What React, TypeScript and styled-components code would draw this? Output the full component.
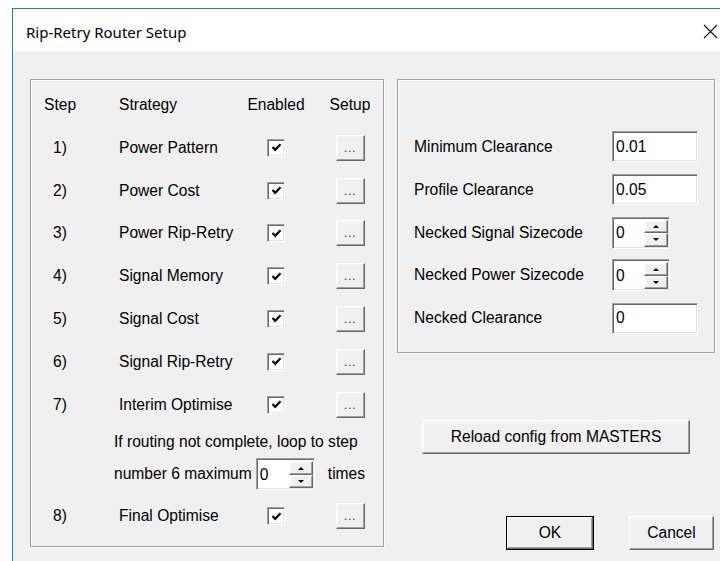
import React from "react";
import styled, { createGlobalStyle, css } from "styled-components";

const GlobalStyle = createGlobalStyle`
  html, body {
    margin: 0;
    background: #fff;
    overflow: hidden;
  }
  body {
    font-family: "Liberation Sans", Arial, sans-serif;
    font-size: 15.6px;
    color: #000;
  }
`;

const sunken = css`
  box-sizing: border-box;
  background: #fff;
  border-top: 1px solid #a0a0a0;
  border-left: 1px solid #a0a0a0;
  border-right: 1px solid #fff;
  border-bottom: 1px solid #fff;
  box-shadow: inset 1px 1px #696969, inset -1px -1px #e3e3e3;
`;

const raised = css`
  box-sizing: border-box;
  background: #f0f0f0;
  border-top: 1px solid #fff;
  border-left: 1px solid #fff;
  border-right: 1px solid #696969;
  border-bottom: 1px solid #696969;
  box-shadow: inset -1px -1px #a0a0a0, inset 1px 1px #f7f7f7;
`;

// the window is wider and taller than the page, so only its top and left edges show
const Window = styled.div`
  margin: 8px 0 0 12px;
  width: 707px;
  height: 552px;
  border: 1px solid #1883d7;
  background: #f0f0f0;
  display: flex;
  flex-direction: column;
`;

const TitleBar = styled.div`
  height: 42px;
  flex: none;
  background: #fff;
  display: flex;
  align-items: center;
  padding-left: 13px;
`;

const Title = styled.span`
  font-family: "Segoe UI", "Noto Sans", sans-serif;
  font-size: 15px;
  padding-top: 3px;
`;

const CloseButton = styled.div`
  margin-left: auto;
  width: 20px;
  height: 42px;
  display: flex;
  align-items: center;
  justify-content: center;
  padding-top: 2px;
`;

const Body = styled.div`
  display: flex;
  align-items: flex-start;
  gap: 13px;
  padding: 28px 0 0 17px;
`;

const GroupBox = styled.div<{ $w: number; $h: number }>`
  box-sizing: border-box;
  flex: none;
  width: ${(p) => p.$w}px;
  height: ${(p) => p.$h}px;
  border: 1px solid #a0a0a0;
  box-shadow: inset 1px 1px #fff, 1px 1px #fff;
`;

const StrategyBox = styled(GroupBox)`
  padding: 3.6px 0 0 13px;
`;

const StrategyRow = styled.div`
  display: grid;
  grid-template-columns: 75px 128px 58px 69px;
  align-items: center;
  height: 42.8px;
`;

const StepCell = styled.span`
  width: 32px;
  text-align: center;
`;

const CheckCell = styled.span`
  display: flex;
  justify-content: center;
`;

const SetupCell = styled.span`
  justify-self: end;
  width: 48px;
  display: flex;
  justify-content: center;
`;

const LoopNote = styled.div`
  margin-left: 70px;
`;

const LoopLine = styled.div<{ $h: number }>`
  height: ${(p) => p.$h}px;
  display: flex;
  align-items: center;
`;

const SpinGap = styled.span<{ $w: number }>`
  width: ${(p) => p.$w}px;
`;

const FinalRow = styled(StrategyRow)`
  margin-top: 4px;
`;

const CheckBox = styled.span`
  ${sunken};
  width: 18px;
  height: 18px;
  display: flex;
  align-items: center;
  justify-content: center;
`;

const DotsButton = styled.div`
  ${raised};
  width: 29px;
  height: 26px;
  display: flex;
  align-items: flex-end;
  justify-content: center;
  font-size: 13px;
  color: #444;
  padding-bottom: 5px;
  letter-spacing: 0.5px;
`;

const RightColumn = styled.div`
  width: 318px;
  flex: none;
  display: flex;
  flex-direction: column;
`;

const ClearanceBox = styled(GroupBox)`
  padding: 45.6px 0 0 16px;
`;

const FieldRow = styled.div`
  display: grid;
  grid-template-columns: 198px auto;
  justify-items: start;
  align-items: center;
  height: 42.8px;
`;

const TextField = styled.div<{ $w: number }>`
  ${sunken};
  width: ${(p) => p.$w}px;
  height: 31px;
  padding: 0 0 0 3px;
  display: flex;
  align-items: center;
`;

const SpinBox = styled.div`
  ${sunken};
  display: inline-flex;
  height: 32px;
  padding: 2px 1px 1px 2px;
`;

const SpinText = styled.span<{ $w: number }>`
  width: ${(p) => p.$w}px;
  display: flex;
  align-items: center;
  padding-left: 1px;
`;

const SpinButtons = styled.div`
  width: 24px;
  display: flex;
  flex-direction: column;
`;

const SpinButton = styled.div`
  ${raised};
  flex: 1;
  display: flex;
  align-items: center;
  justify-content: center;
`;

const Arrow = styled.span<{ $down?: boolean }>`
  width: 0;
  height: 0;
  border-left: 3px solid transparent;
  border-right: 3px solid transparent;
  ${(p) =>
    p.$down
      ? "border-top: 3px solid #000;"
      : "border-bottom: 3px solid #000;"}
`;

const PushButton = styled.div<{ $w: number; $default?: boolean }>`
  ${raised};
  width: ${(p) => p.$w}px;
  height: 34px;
  display: flex;
  align-items: center;
  justify-content: center;
  ${(p) =>
    p.$default &&
    css`
      border: 1px solid #000;
      box-shadow: inset -1px -1px #696969, inset 1px 1px #fff,
        inset -2px -2px #a0a0a0;
    `}
`;

const ReloadRow = styled.div`
  display: flex;
  justify-content: center;
  margin-top: 67px;
`;

const DialogButtons = styled.div`
  display: flex;
  justify-content: flex-end;
  gap: 35px;
  margin-top: 62px;
  padding-right: 1px;
`;

const steps = [
  "Power Pattern",
  "Power Cost",
  "Power Rip-Retry",
  "Signal Memory",
  "Signal Cost",
  "Signal Rip-Retry",
  "Interim Optimise",
];

const Check = () => (
  <CheckBox>
    <svg width="11" height="11" viewBox="0 0 11 11">
      <path d="M1.5 5 L4.2 7.8 L9.5 2.2" fill="none" stroke="#000" strokeWidth="2.2" />
    </svg>
  </CheckBox>
);

const Spin = ({ value, width }: { value: string; width: number }) => (
  <SpinBox>
    <SpinText $w={width}>{value}</SpinText>
    <SpinButtons>
      <SpinButton>
        <Arrow />
      </SpinButton>
      <SpinButton>
        <Arrow $down />
      </SpinButton>
    </SpinButtons>
  </SpinBox>
);

const StepRow = ({
  n,
  name,
  as: Row = StrategyRow,
}: {
  n: number;
  name: string;
  as?: typeof StrategyRow;
}) => (
  <Row>
    <StepCell>{n})</StepCell>
    <span>{name}</span>
    <CheckCell>
      <Check />
    </CheckCell>
    <SetupCell>
      <DotsButton>...</DotsButton>
    </SetupCell>
  </Row>
);

export default function App() {
  return (
    <>
      <GlobalStyle />
      <Window>
        <TitleBar>
          <Title>Rip-Retry Router Setup</Title>
          <CloseButton>
            <svg width="15" height="15" viewBox="0 0 15 15">
              <path d="M1 1 L14 14 M14 1 L1 14" stroke="#111" strokeWidth="1.1" />
            </svg>
          </CloseButton>
        </TitleBar>
        <Body>
          <StrategyBox $w={354} $h={468}>
            <StrategyRow>
              <StepCell>Step</StepCell>
              <span>Strategy</span>
              <CheckCell>Enabled</CheckCell>
              <SetupCell>Setup</SetupCell>
            </StrategyRow>
            {steps.map((name, i) => (
              <StepRow key={name} n={i + 1} name={name} />
            ))}
            <LoopNote>
              <LoopLine $h={32}>If routing not complete, loop to step</LoopLine>
              <LoopLine $h={33}>
                number 6 maximum
                <SpinGap $w={4} />
                <Spin value="0" width={29} />
                <SpinGap $w={13} />
                times
              </LoopLine>
            </LoopNote>
            <StepRow n={8} name="Final Optimise" as={FinalRow} />
          </StrategyBox>
          <RightColumn>
            <ClearanceBox $w={318} $h={274}>
              <FieldRow>
                <span>Minimum Clearance</span>
                <TextField $w={86}>0.01</TextField>
              </FieldRow>
              <FieldRow>
                <span>Profile Clearance</span>
                <TextField $w={86}>0.05</TextField>
              </FieldRow>
              <FieldRow>
                <span>Necked Signal Sizecode</span>
                <Spin value="0" width={28} />
              </FieldRow>
              <FieldRow>
                <span>Necked Power Sizecode</span>
                <Spin value="0" width={28} />
              </FieldRow>
              <FieldRow>
                <span>Necked Clearance</span>
                <TextField $w={86}>0</TextField>
              </FieldRow>
            </ClearanceBox>
            <ReloadRow>
              <PushButton $w={268}>Reload config from MASTERS</PushButton>
            </ReloadRow>
            <DialogButtons>
              <PushButton $w={88} $default>
                OK
              </PushButton>
              <PushButton $w={85}>Cancel</PushButton>
            </DialogButtons>
          </RightColumn>
        </Body>
      </Window>
    </>
  );
}
